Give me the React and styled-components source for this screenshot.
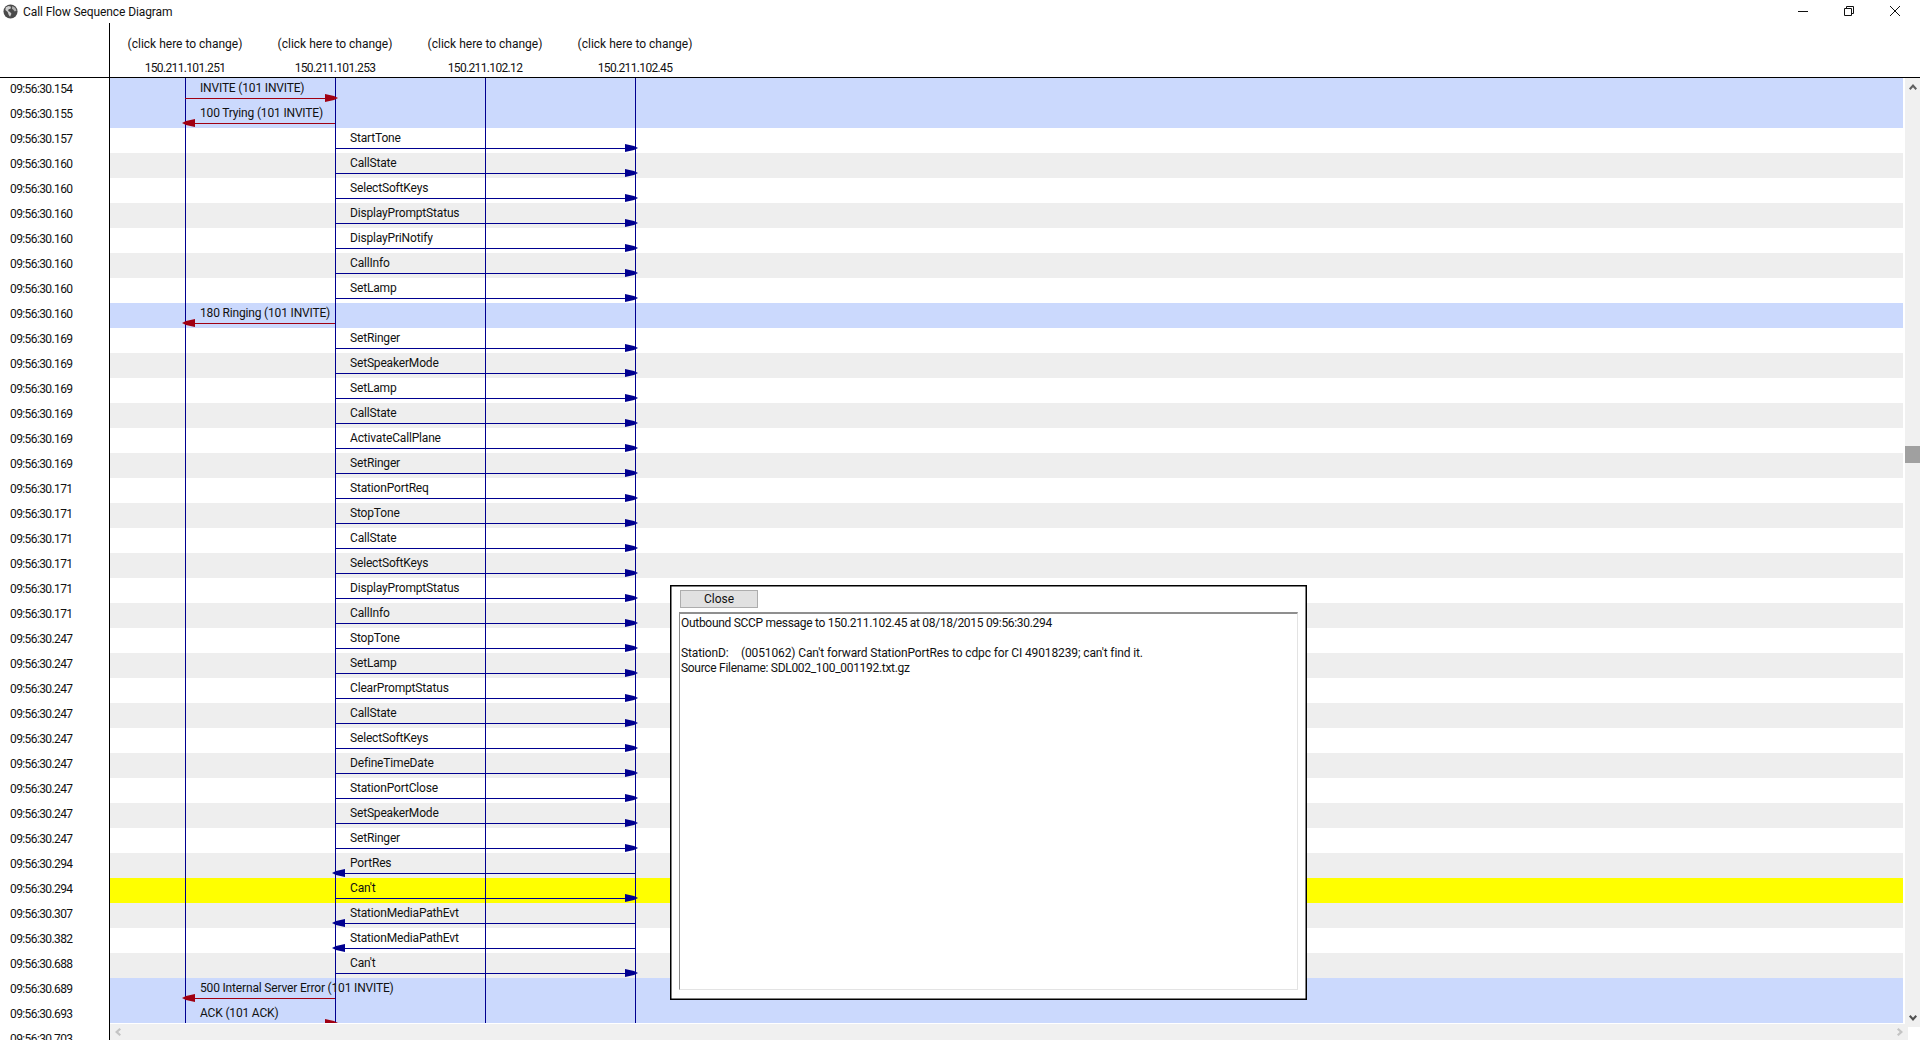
import React from 'react';
import styled, { createGlobalStyle } from 'styled-components';

const LIFELINES = [75, 225, 375, 525];
const HOSTS = ['150.211.101.251', '150.211.101.253', '150.211.102.12', '150.211.102.45'];

// time, label, from lifeline, to lifeline, row colour (sip = blue, hit = yellow)
const MESSAGES = [
  ['154', 'INVITE (101 INVITE)', 0, 1, 'sip'],
  ['155', '100 Trying (101 INVITE)', 1, 0, 'sip'],
  ['157', 'StartTone', 1, 3],
  ['160', 'CallState', 1, 3],
  ['160', 'SelectSoftKeys', 1, 3],
  ['160', 'DisplayPromptStatus', 1, 3],
  ['160', 'DisplayPriNotify', 1, 3],
  ['160', 'CallInfo', 1, 3],
  ['160', 'SetLamp', 1, 3],
  ['160', '180 Ringing (101 INVITE)', 1, 0, 'sip'],
  ['169', 'SetRinger', 1, 3],
  ['169', 'SetSpeakerMode', 1, 3],
  ['169', 'SetLamp', 1, 3],
  ['169', 'CallState', 1, 3],
  ['169', 'ActivateCallPlane', 1, 3],
  ['169', 'SetRinger', 1, 3],
  ['171', 'StationPortReq', 1, 3],
  ['171', 'StopTone', 1, 3],
  ['171', 'CallState', 1, 3],
  ['171', 'SelectSoftKeys', 1, 3],
  ['171', 'DisplayPromptStatus', 1, 3],
  ['171', 'CallInfo', 1, 3],
  ['247', 'StopTone', 1, 3],
  ['247', 'SetLamp', 1, 3],
  ['247', 'ClearPromptStatus', 1, 3],
  ['247', 'CallState', 1, 3],
  ['247', 'SelectSoftKeys', 1, 3],
  ['247', 'DefineTimeDate', 1, 3],
  ['247', 'StationPortClose', 1, 3],
  ['247', 'SetSpeakerMode', 1, 3],
  ['247', 'SetRinger', 1, 3],
  ['294', 'PortRes', 3, 1],
  ['294', "Can't", 1, 3, 'hit'],
  ['307', 'StationMediaPathEvt', 3, 1],
  ['382', 'StationMediaPathEvt', 3, 1],
  ['688', "Can't", 1, 3],
  ['689', '500 Internal Server Error (101 INVITE)', 1, 0, 'sip'],
  ['693', 'ACK (101 ACK)', 0, 1, 'sip'],
];

const rowColour = (kind, index) => {
  if (kind === 'sip') return '#cbd9fd';
  if (kind === 'hit') return '#ffff00';
  return index % 2 ? '#eeeeee' : '#ffffff';
};

const App = () => {
  return (
    <Page>
      <GlobalStyle />
      <TitleBar>
        <GlobeIcon />
        <WindowTitle>Call Flow Sequence Diagram</WindowTitle>
        <WindowButtons>
          <WindowButton>
            <svg width="12" height="12" viewBox="0 0 12 12">
              <path d="M1 5.500h10" stroke="#111" fill="none" />
            </svg>
          </WindowButton>
          <WindowButton>
            <svg width="12" height="12" viewBox="0 0 12 12">
              <path d="M1.500 2.500h7v7h-7zM3.500 2.500v-2h7v7h-2" stroke="#111" fill="none" />
            </svg>
          </WindowButton>
          <WindowButton>
            <svg width="12" height="12" viewBox="0 0 12 12">
              <path d="M1 0l10 10M11 0L1 10" stroke="#111" fill="none" />
            </svg>
          </WindowButton>
        </WindowButtons>
      </TitleBar>

      <HeaderRow>
        <TimeHead />
        {HOSTS.map((host) => (
          <HostColumn key={host}>
            <ChangeLink>(click here to change)</ChangeLink>
            <HostAddress>{host}</HostAddress>
          </HostColumn>
        ))}
      </HeaderRow>

      <Body>
        <TimeColumn>
          {MESSAGES.map(([ms], i) => (
            <TimeCell key={i}>09:56:30.{ms}</TimeCell>
          ))}
          <TimeCell>09:56:30.703</TimeCell>
        </TimeColumn>

        <ChartArea>
          <ChartTop>
            <Viewport>
              {MESSAGES.map(([, label, from, to, kind], i) => (
                <Row key={i} $colour={rowColour(kind, i)}>
                  <Message $from={Math.min(from, to)} $to={Math.max(from, to)}>
                    <MessageLabel>{label}</MessageLabel>
                    <ArrowLine $red={kind === 'sip'}>
                      <ArrowHead $left={to < from} viewBox="0 0 13 8" width="13" height="8">
                        <path d={to < from ? 'M13 0L4 2 0 4l4 2 9 2Z' : 'M0 0L9 2l4 2-4 2-9 2Z'} />
                      </ArrowHead>
                    </ArrowLine>
                  </Message>
                </Row>
              ))}
              {LIFELINES.map((x) => (
                <Lifeline key={x} $x={x} />
              ))}
            </Viewport>
            <VerticalScroll>
              <VArrow viewBox="0 0 8 6">
                <path d="M0 4.500l4-4.500 4 4.500-1.500 1.500L4 3.200 1.500 6z" fill="#606060" />
              </VArrow>
              <ScrollTrack>
                <ScrollThumb />
              </ScrollTrack>
              <VArrow viewBox="0 0 8 6">
                <path d="M0 1.500L4 6l4-4.500L6.500 0 4 2.800 1.500 0z" fill="#505050" />
              </VArrow>
            </VerticalScroll>
          </ChartTop>
          <HorizontalScroll>
            <HArrow viewBox="0 0 6 8">
              <path d="M4.500 0L0 4l4.500 4L6 6.500 3.200 4 6 1.500z" fill="#c4c4c4" />
            </HArrow>
            <RightArrow viewBox="0 0 6 8">
              <path d="M1.500 0L6 4 1.500 8 0 6.500 2.800 4 0 1.500z" fill="#c4c4c4" />
            </RightArrow>
            <ScrollCorner />
          </HorizontalScroll>
        </ChartArea>
      </Body>

      <DetailsDialog>
        <CloseButton>Close</CloseButton>
        <DetailsText>
          <DetailsLine>Outbound SCCP message to 150.211.102.45 at 08/18/2015 09:56:30.294</DetailsLine>
          <DetailsLine>&nbsp;</DetailsLine>
          <ForwardLine>
            <TabStop>StationD:</TabStop>(0051062) Can&apos;t forward StationPortRes to cdpc for CI 49018239; can&apos;t find it.
          </ForwardLine>
          <DetailsLine>Source Filename: SDL002_100_001192.txt.gz</DetailsLine>
        </DetailsText>
      </DetailsDialog>
    </Page>
  );
};

const GlobeIcon = () => (
  <TitleIcon viewBox="0 0 16 16" width="15" height="15">
    <circle cx="8" cy="8" r="7.5" fill="#4a4a4a" />
    <path d="M3 3.500l3-1.500 2.500 1-.5 2-2 .5-.5 2 2 1 1.500 2-1.500 3-1.500-2-1-3-2.500-2z" fill="#cfcfcf" />
    <path d="M10 2l3 2 1.500 3-2 1-1.500-2-1.500-1z" fill="#b0b0b0" />
  </TitleIcon>
);

export default App;

const GlobalStyle = createGlobalStyle`
  html, body {
    margin: 0;
    padding: 0;
    background: #fff;
    overflow: hidden;
  }
`;

const Page = styled.div`
  position: relative;
  width: 1920px;
  height: 1040px;
  display: flex;
  flex-direction: column;
  overflow: hidden;
  background: #fff;
  color: #111;
  font-family: 'Roboto', sans-serif;
  font-size: 12px;
`;

const TitleBar = styled.div`
  height: 23px;
  flex: none;
  display: flex;
  align-items: center;
`;

const TitleIcon = styled.svg`
  margin-left: 3px;
  flex: none;
`;

const WindowTitle = styled.div`
  margin-left: 5px;
  line-height: 24px;
  letter-spacing: -0.1px;
`;

const WindowButtons = styled.div`
  margin-left: auto;
  margin-right: 2px;
  display: flex;
  height: 21px;
`;

const WindowButton = styled.div`
  width: 46px;
  display: flex;
  align-items: center;
  justify-content: center;
`;

const HeaderRow = styled.div`
  height: 54px;
  flex: none;
  display: flex;
  border-bottom: 1px solid #000;
`;

const TimeHead = styled.div`
  width: 109px;
  flex: none;
  border-right: 1px solid #000;
`;

const HostColumn = styled.div`
  width: 150px;
  flex: none;
  display: flex;
  flex-direction: column;
  align-items: center;
  white-space: nowrap;
`;

const ChangeLink = styled.div`
  margin-top: 13px;
  line-height: 16px;
`;

const HostAddress = styled.div`
  margin-top: 9px;
  line-height: 14px;
  letter-spacing: -0.65px;
`;

const Body = styled.div`
  flex: 1;
  display: flex;
  min-height: 0;
`;

const TimeColumn = styled.div`
  width: 109px;
  flex: none;
  border-right: 1px solid #000;
  overflow: hidden;
`;

const TimeCell = styled.div`
  height: 25px;
  line-height: 22px;
  padding-left: 10px;
  letter-spacing: -0.6px;
`;

const ChartArea = styled.div`
  flex: 1;
  min-width: 0;
  display: flex;
  flex-direction: column;
`;

const ChartTop = styled.div`
  height: 945px;
  flex: none;
  display: flex;
  gap: 2px;
`;

const Viewport = styled.div`
  position: relative;
  flex: 1;
  overflow: hidden;
`;

const Row = styled.div`
  height: 25px;
  background: ${({ $colour }) => $colour};
`;

const Message = styled.div`
  position: relative;
  z-index: 2;
  margin-left: ${({ $from }) => LIFELINES[$from]}px;
  width: ${({ $from, $to }) => LIFELINES[$to] - LIFELINES[$from]}px;
  display: flex;
  flex-direction: column;
`;

const MessageLabel = styled.div`
  height: 20px;
  line-height: 21px;
  padding-left: 15px;
  white-space: nowrap;
  letter-spacing: -0.17px;
`;

const ArrowLine = styled.div`
  position: relative;
  height: 1px;
  background: ${({ $red }) => ($red ? '#a00012' : '#000090')};
  color: ${({ $red }) => ($red ? '#a00012' : '#000090')};
`;

const ArrowHead = styled.svg`
  position: absolute;
  top: -4px;
  ${({ $left }) => ($left ? 'left: -3px;' : 'right: -3px;')}
  fill: currentColor;
`;

const Lifeline = styled.div`
  position: absolute;
  top: 0;
  bottom: 0;
  left: ${({ $x }) => $x}px;
  width: 1px;
  background: #000090;
  z-index: 1;
`;

const VerticalScroll = styled.div`
  width: 15px;
  flex: none;
  margin-bottom: -4px;
  background: #f0f0f0;
  display: flex;
  flex-direction: column;
  align-items: center;
  padding: 6px 0;
  position: relative;
  z-index: 3;
`;

const VArrow = styled.svg`
  width: 8px;
  height: 6px;
  flex: none;
`;

const ScrollTrack = styled.div`
  flex: 1;
  width: 100%;
  padding-top: 356px;
`;

const ScrollThumb = styled.div`
  height: 17px;
  background: #a0a0a0;
`;

const HorizontalScroll = styled.div`
  flex: 1;
  margin-top: 1px;
  background: #f0f0f0;
  display: flex;
  align-items: center;
  padding-left: 5px;
`;

const HArrow = styled.svg`
  width: 6px;
  height: 8px;
  flex: none;
`;

const RightArrow = styled(HArrow)`
  margin-left: auto;
  margin-right: 5px;
`;

const ScrollCorner = styled.div`
  width: 12px;
  height: 13px;
  align-self: flex-end;
  background: #fff;
  flex: none;
`;

const DetailsDialog = styled.div`
  position: absolute;
  left: 670px;
  top: 585px;
  width: 637px;
  height: 415px;
  box-sizing: border-box;
  border: 1px solid #000;
  box-shadow: inset 0 0 0 0.5px #000;
  background: #fff;
  z-index: 5;
  display: flex;
  flex-direction: column;
  padding: 4px 8px 9px 8px;
`;

const CloseButton = styled.button`
  width: 78px;
  height: 18px;
  flex: none;
  margin-left: 1px;
  padding: 0;
  background: #e1e1e1;
  border: 1px solid #adadad;
  color: #111;
  font: inherit;
`;

const DetailsText = styled.div`
  margin-top: 4px;
  flex: 1;
  border-style: solid;
  border-width: 2px 1px 1px 1px;
  border-color: #8f8f8f #e3e3e3 #e3e3e3 #8f8f8f;
  padding: 2px 1px;
`;

const DetailsLine = styled.div`
  line-height: 15px;
  white-space: nowrap;
  letter-spacing: -0.3px;
`;

const ForwardLine = styled(DetailsLine)`
  letter-spacing: -0.12px;
`;

const TabStop = styled.span`
  display: inline-block;
  width: 60px;
`;
